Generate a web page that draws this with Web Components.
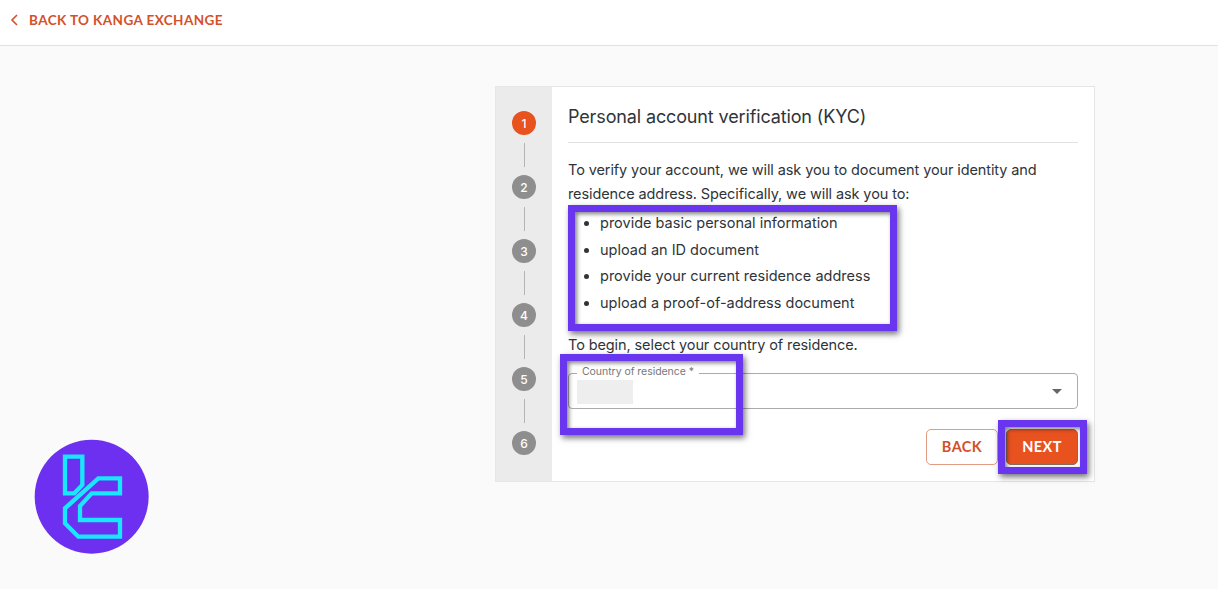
<!DOCTYPE html>
<html>
<head>
<meta charset="utf-8">
<title>KYC</title>
<style>
    html, body { margin: 0; height: 100%; }
    body {
        position: relative;
        height: 589px;
        overflow: hidden;
        background: #fafafa;
        color: #2f3438;
        font-family: "Inter", "Liberation Sans", sans-serif;
    }
</style>
</head>
<body>
<top-bar>BACK TO KANGA EXCHANGE</top-bar>
<page-body>
    <kyc-card></kyc-card>
</page-body>
<mark-box style="left:568px;top:205px;width:329px;height:126px"></mark-box>
<mark-box style="left:560px;top:354px;width:183px;height:81px"></mark-box>
<mark-box style="left:998px;top:420px;width:89px;height:54px"></mark-box>
<brand-badge></brand-badge>

<script>
class TopBar extends HTMLElement {
    constructor() {
        super();
        this.attachShadow({mode: 'open'}).innerHTML = `
            <style>
                :host {
                    display: flex;
                    align-items: center;
                    gap: 11px;
                    box-sizing: border-box;
                    height: 46px;
                    padding: 0 0 5px 10px;
                    background: #fff;
                    border-bottom: 1px solid #e2e2e2;
                    color: #d4502a;
                    font: 700 13.5px "Lato", "Liberation Sans", sans-serif;
                    letter-spacing: .41px;
                }
            </style>
            <svg width="8" height="12" viewBox="0 0 8 12"><path d="M7 1 2 6l5 5" fill="none" stroke="#d4502a" stroke-width="1.6"/></svg>
            <slot></slot>`;
    }
}
customElements.define('top-bar', TopBar);

class PageBody extends HTMLElement {
    constructor() {
        super();
        this.attachShadow({mode: 'open'}).innerHTML = `
            <style>
                :host { display: block; padding: 40px 0 0 495px; }
            </style>
            <slot></slot>`;
    }
}
customElements.define('page-body', PageBody);

class StepRail extends HTMLElement {
    constructor() {
        super();
        const steps = [1, 2, 3, 4, 5, 6].map(n =>
            `${n > 1 ? '<i></i>' : ''}<b class="${n === 1 ? 'on' : ''}">${n}</b>`).join('');
        this.attachShadow({mode: 'open'}).innerHTML = `
            <style>
                :host {
                    display: flex;
                    flex-direction: column;
                    align-items: center;
                    width: 56px;
                    flex: none;
                    box-sizing: border-box;
                    padding-top: 24px;
                    background: #ebebeb;
                }
                b {
                    display: flex;
                    align-items: center;
                    justify-content: center;
                    width: 24px;
                    height: 24px;
                    border-radius: 50%;
                    background: #8e8e8e;
                    color: #fff;
                    font: 500 12px "Inter", "Liberation Sans", sans-serif;
                }
                b.on { background: #e8521f; }
                i { display: block; width: 1px; height: 24px; margin: 8px 0; background: #b5b5b5; }
            </style>
            ${steps}`;
    }
}
customElements.define('step-rail', StepRail);

class SelectField extends HTMLElement {
    constructor() {
        super();
        this.attachShadow({mode: 'open'}).innerHTML = `
            <style>
                :host {
                    display: block;
                    position: relative;
                    box-sizing: border-box;
                    height: 36px;
                    border: 1px solid #ababab;
                    border-radius: 4px;
                    background: #fff;
                }
                label {
                    position: absolute;
                    left: 8px;
                    top: -9px;
                    padding: 0 5px;
                    background: #fff;
                    color: #777;
                    font: 400 10.5px/14px "Inter", "Liberation Sans", sans-serif;
                    letter-spacing: -.05px;
                }
                .value { position: absolute; left: 8px; top: 6px; width: 56px; height: 24px; background: #eeeeee; }
                .arrow {
                    position: absolute;
                    right: 15px;
                    top: 15px;
                    border: 5px solid transparent;
                    border-top: 5px solid #666;
                    border-bottom: 0;
                }
            </style>
            <label>Country of residence *</label>
            <div class="value"></div>
            <div class="arrow"></div>`;
    }
}
customElements.define('select-field', SelectField);

class KycButton extends HTMLElement {
    constructor() {
        super();
        this.attachShadow({mode: 'open'}).innerHTML = `
            <style>
                :host {
                    display: flex;
                    align-items: center;
                    justify-content: center;
                    box-sizing: border-box;
                    width: 72px;
                    height: 36px;
                    border: 1px solid #e29a82;
                    border-radius: 5px;
                    background: #fff;
                    color: #d4502a;
                    font: 700 14.5px "Lato", "Liberation Sans", sans-serif;
                    letter-spacing: .4px;
                }
                :host([primary]) { background: #e8521f; border-color: #8a6a5e; color: #fff; }
            </style>
            <slot></slot>`;
    }
}
customElements.define('kyc-button', KycButton);

class KycCard extends HTMLElement {
    constructor() {
        super();
        this.attachShadow({mode: 'open'}).innerHTML = `
            <style>
                :host {
                    display: flex;
                    box-sizing: border-box;
                    width: 600px;
                    height: 396px;
                    border: 1px solid #e6e6e6;
                    background: #fff;
                }
                .content { flex: 1; padding: 0 16px; }
                h1 {
                    margin: 0 0 15px;
                    height: 55px;
                    line-height: 60px;
                    border-bottom: 1px solid #e2e2e2;
                    font-size: 18px;
                    font-weight: 400;
                    letter-spacing: -.135px;
                }
                p { margin: 0; font-size: 14.5px; line-height: 23.5px; letter-spacing: -.1px; }
                ul { margin: 5px 0 0; padding: 0 0 0 32px; font-size: 14.5px; letter-spacing: 0; }
                li { height: 26.6px; line-height: 26.6px; }
                .begin { margin-top: 17px; }
                select-field { margin-top: 16px; }
                .actions { display: flex; justify-content: flex-end; gap: 8px; margin-top: 20px; }
            </style>
            <step-rail></step-rail>
            <div class="content">
                <h1>Personal account verification (KYC)</h1>
                <p>To verify your account, we will ask you to document your identity and residence address. Specifically, we will ask you to:</p>
                <ul>
                    <li>provide basic personal information</li>
                    <li>upload an ID document</li>
                    <li>provide your current residence address</li>
                    <li>upload a proof-of-address document</li>
                </ul>
                <p class="begin">To begin, select your country of residence.</p>
                <select-field></select-field>
                <div class="actions">
                    <kyc-button>BACK</kyc-button>
                    <kyc-button primary>NEXT</kyc-button>
                </div>
            </div>`;
    }
}
customElements.define('kyc-card', KycCard);

// purple callouts drawn over the screenshot
class MarkBox extends HTMLElement {
    constructor() {
        super();
        this.attachShadow({mode: 'open'}).innerHTML = `
            <style>
                :host {
                    position: absolute;
                    box-sizing: border-box;
                    border: 7px solid #6a35ee;
                    box-shadow: 2px 3px 6px rgba(0,0,0,.55), inset 2px 2px 4px rgba(0,0,0,.5);
                }
            </style>`;
    }
}
customElements.define('mark-box', MarkBox);

class BrandBadge extends HTMLElement {
    constructor() {
        super();
        this.attachShadow({mode: 'open'}).innerHTML = `
            <style>
                :host { position: absolute; left: 20px; top: 430px; width: 140px; height: 130px; }
                svg { display: block; }
            </style>
            <svg width="140" height="130" viewBox="0 0 420 390">
                <circle cx="215" cy="200" r="171" fill="#6d2ff0"/>
                <g fill="none" stroke="#19e6ff" stroke-width="13">
                    <path d="M135 80H187V165L163 190H135Z"/>
                    <path d="M235 145H300V190H215L180 228V270H300V320H175L135 280V235Z"/>
                </g>
            </svg>`;
    }
}
customElements.define('brand-badge', BrandBadge);
</script>
</body>
</html>
